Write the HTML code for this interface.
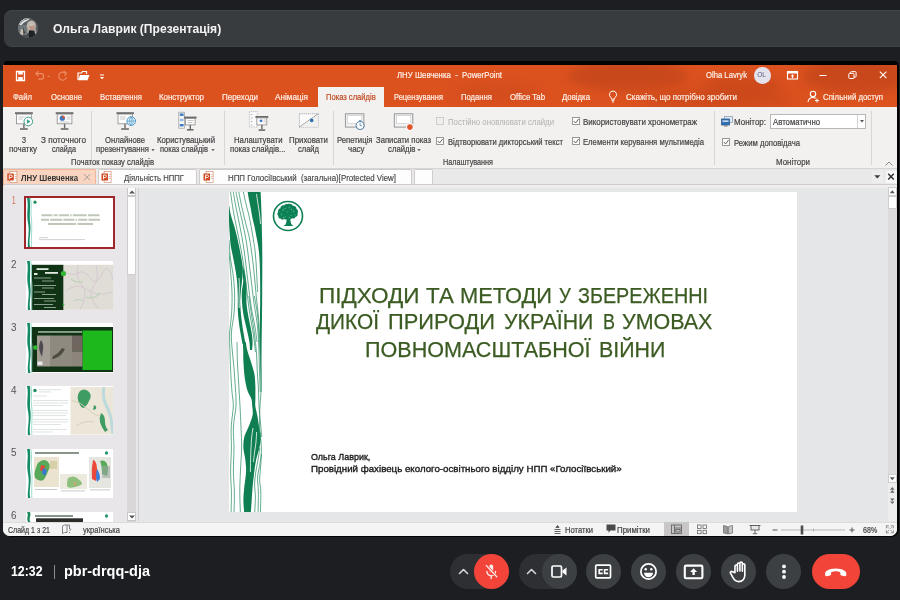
<!DOCTYPE html>
<html lang="uk">
<head>
<meta charset="utf-8">
<title>Meet</title>
<style>
*{box-sizing:border-box;margin:0;padding:0}
html,body{width:900px;height:600px;overflow:hidden;background:#1c1e22;font-family:"Liberation Sans",sans-serif}
#root{position:relative;width:900px;height:600px;overflow:hidden;background:#1c1e22;filter:blur(.4px)}
#root div,#root svg,#root span{position:absolute}
.t{white-space:pre;line-height:1;transform-origin:0 0;font-family:"Liberation Sans",sans-serif}
#namebar{left:4px;top:10px;width:900px;height:36.500px;background:#383c3f;border-radius:8px 0 0 8px;border-top:1px solid #42464a;border-bottom:1px solid #404447}
#avatar{left:17.500px;top:17.600px;width:20.800px;height:20.800px;border-radius:50%;overflow:hidden;background:#5b5a55}
#frame{left:3.500px;top:61px;width:895.500px;height:476px;background:#030303;border-radius:3px 5px 8px 8px}
#win{left:3.200px;top:65px;width:893.800px;height:471px;background:#e6e6e6;border-radius:1px 2px 7px 7px;overflow:hidden}
#orange{left:0;top:0;width:894px;height:41.500px;background:#dc521f;overflow:hidden}
.cl{border-radius:50%;background:#c2451b;filter:blur(5px);opacity:.75}
#acttab{left:314.400px;top:22.200px;width:66.800px;height:20px;background:#f3f1f0}
#ribbon{left:0;top:41.500px;width:894px;height:61.500px;background:#f3f1f0}
.vsep{width:1px;background:#d8d5d4;top:46px;height:54px}
#doctabs{left:0;top:102.500px;width:894px;height:21px;background:#eae9e9;border-top:1px solid #d6d4d3}
.dtab{top:104px;height:17px;background:#fdfdfd;border:1px solid #cfcccb;border-bottom:none;border-radius:2px 2px 0 0}
#dt1{left:0;width:93px;background:#f9d5c1;border-color:#f0b597}
#thumbs{left:0;top:122px;width:134px;height:335px;background:#e8e6e8}
#work{left:134px;top:122px;width:760px;height:335px;background:#e5e6e8}
#slide{left:225.500px;top:126.600px;width:568.300px;height:320.600px;background:#fff;overflow:hidden}
#status{left:0;top:456.500px;width:894px;height:15px;background:#f4f4f4;border-top:1px solid #dddcdc}
.th{left:21.7px;width:87px;height:49.5px;background:#fff;overflow:hidden}
.pill{background:#2d2f32;border-radius:18px;height:35px;top:554px}
.cb{width:35px;height:35px;border-radius:50%;background:#3c4043;top:554px}
.chk{width:8px;height:8px;border:1px solid #9a9897;background:#fbfbfb}

</style>
</head>
<body>
<div id="root">
<div id="namebar"></div>
<div id="avatar">
  <svg width="21" height="21" viewBox="0 0 21 21"><defs><filter id="bl" x="-20%" y="-20%" width="140%" height="140%"><feGaussianBlur stdDeviation=".7"/></filter></defs>
  <rect width="21" height="21" fill="#5a5e60"/>
  <g filter="url(#bl)"><path d="M0 9C2 3 7 0 13 0L0 0z" fill="#e9ecee"/><path d="M1 8C3 3.500 7 1.200 12 .8L9 3C6 4 4 6 2.500 9z" fill="#dfe3e5"/>
  <rect x="0" y="7" width="9" height="12" fill="#70777a"/><path d="M3 11l3 1-1 5-3-1z" fill="#c9bfae"/><path d="M5 9l2 6-1.500 1z" fill="#2b2d30"/>
  <ellipse cx="13.300" cy="8" rx="4.600" ry="5.600" fill="#bdb8b0"/><ellipse cx="14" cy="9" rx="2.700" ry="3.500" fill="#bb958a"/><ellipse cx="13.500" cy="6.500" rx="2.200" ry="1.500" fill="#c9c2b8"/>
  <path d="M8.500 21c0-5 2-8 5-8.500 3-.5 5.500 2 6 8.500z" fill="#1e2125"/><path d="M10 12.500l2 2.500 1.500-2.500z" fill="#15171a"/><path d="M16.500 9c1.500 2 2.500 5 2 9l-1.800-3z" fill="#a9a59e"/><path d="M9.800 8c-1 3-1 6 .2 9l1-4z" fill="#aaa59c"/>
  <rect x="3" y="17" width="8" height="4" fill="#4c4f51"/></g></svg>
</div>
<div id="frame"></div>
<div id="win">
  <div id="orange"><div class="cl" style="left:565px;top:-4px;width:120px;height:30px"></div><div class="cl" style="left:700px;top:10px;width:80px;height:22px;opacity:.5"></div><div class="cl" style="left:800px;top:-6px;width:110px;height:34px"></div><div class="cl" style="left:640px;top:24px;width:150px;height:22px;opacity:.45"></div><div class="cl" style="left:450px;top:18px;width:90px;height:20px;opacity:.3"></div></div>
  <div id="acttab"></div>
  <div id="ribbon"></div>
  <div class="vsep" style="left:88px"></div>
  <div class="vsep" style="left:221.300px"></div>
  <div class="vsep" style="left:329.500px"></div>
  <div class="vsep" style="left:711px"></div>
  <div class="vsep" style="left:868.300px"></div>
  <div id="doctabs"></div>
  <div class="dtab" id="dt1"></div>
  <div class="dtab" style="left:95px;width:99px"></div>
  <div class="dtab" style="left:196px;width:213px"></div>
  <div class="dtab" style="left:411px;width:19px"></div>
  <div id="thumbs"></div>
  <div id="work"></div>
  <div id="slide"></div>
  <div id="status"></div>
</div>
<!-- meet bottom -->
<div style="left:54px;top:565px;width:1px;height:14px;background:#8b8d90"></div>
<div class="pill" style="left:450px;width:59px"></div>
<div class="cb" style="left:474px;background:#f3443a"></div>
<div class="pill" style="left:518.5px;width:58px"></div>
<div class="cb" style="left:541.5px"></div>
<div class="cb" style="left:585.5px"></div>
<div class="cb" style="left:631px"></div>
<div class="cb" style="left:676px"></div>
<div class="cb" style="left:721px"></div>
<div class="cb" style="left:766px"></div>
<div class="pill" style="left:811.5px;width:48px;background:#f3443a"></div>
<!-- overlay in page coordinates -->
<div id="ov" style="left:0;top:0;width:900px;height:600px">
 <!-- thumbnails -->
 <div style="left:23.6px;top:195.6px;width:91.4px;height:53.2px;background:#a0262c"></div>
 <div class="th" style="left:25.6px;top:197.6px;width:87.4px;height:49.2px">
   <svg width="88" height="50" viewBox="0 0 88 50"><path d="M0 0h5.5c-2 8 1.500 14 .5 22s1.500 18-.5 28H0z" fill="#fff"/><path d="M1 0c2 9-1 14 1 25s-1 16 0 25h2.200c-2-9 1.200-15 0-25S5 9 3.600 0z" fill="#148a68"/><path d="M4.500 0c2 8-.5 12 .8 20s-.5 20 .3 30" stroke="#86d3bf" stroke-width=".8" fill="none"/><circle cx="9" cy="4.200" r="1.600" fill="#1f8a5c"/>
   <g stroke="#8c9a80" stroke-width="2" opacity=".55" fill="none"><path d="M15.500 17.300h58" stroke-dasharray="11 1.200 4 1.200 10 1.200 1.500 1.200 14 1.200 12"/><path d="M15 21.700h59" stroke-dasharray="8 1.200 12 1.200 11 1.200 1.500 1.200 9 1.200 12"/><path d="M22 26.100h45" stroke-dasharray="28 1.400 16"/></g>
   <rect x="13" y="39.300" width="9" height=".8" fill="#c5c5c5"/><rect x="13" y="41.300" width="46" height=".8" fill="#c5c5c5"/></svg>
 </div>
 <div class="th" style="left:25.7px;top:260.5px">
   <svg width="87" height="50" viewBox="0 0 87 50"><rect width="87" height="50" fill="#fff"/><rect x="5.600" y="3.800" width="32" height="46.200" fill="#0f3314"/><rect x="37.600" y="3.800" width="49.400" height="45" fill="#e0ddd7"/>
   <path d="M38 10q8 6 14 2t12 5 12-4 11 6M40 30q10-8 18-3t14 6 15-2M52 4q-3 12 4 20t-2 25M70 4q4 14-3 22t6 22" stroke="#d6c9d0" stroke-width="1" fill="none"/><path d="M45 18q6 5 12 2M60 36q8 3 14-4M48 40q4-3 9 0" stroke="#bdd3b8" stroke-width="1.200" fill="none"/>
   <path d="M1 0c2 9-1 14 1 25s-1 16 0 25h2.400c-2-9 1.200-15 0-25S5 9 3.800 0z" fill="#148a68"/><path d="M4.800 0c2 8-.5 12 .8 20s-.5 20 .3 30" stroke="#86d3bf" stroke-width=".8" fill="none"/>
   <circle cx="37.400" cy="12.500" r="2.600" fill="#2fb830"/><circle cx="37.400" cy="43.500" r="1" fill="#2fb830"/>
   <g fill="#dfe9df"><rect x="10.500" y="7.200" width="12" height="1.800"/><rect x="8" y="12" width="3.500" height="2"/><rect x="19" y="11" width="13" height="1.800"/><rect x="8" y="16.500" width="17" height="1" opacity=".6"/><rect x="16" y="19.500" width="12" height="1" opacity=".6"/><rect x="8" y="24" width="22" height="1" opacity=".6"/><rect x="16" y="26.500" width="12" height="1" opacity=".6"/><rect x="8" y="30.500" width="11" height="1" opacity=".6"/><rect x="16" y="33" width="14" height="1" opacity=".6"/><rect x="8" y="37" width="20" height="1" opacity=".6"/><rect x="18" y="39.500" width="12" height="1" opacity=".6"/><rect x="8" y="43" width="19" height="1" opacity=".6"/><rect x="18" y="46" width="12" height="1" opacity=".6"/></g></svg>
 </div>
 <div class="th" style="left:25.7px;top:323px">
   <svg width="87" height="50" viewBox="0 0 87 50"><rect width="87" height="50" fill="#fff"/><rect x="5.600" y="4" width="81.400" height="45" fill="#0f3314"/><rect x="56.500" y="7.500" width="29.500" height="39.500" fill="#1cb81c"/>
   <rect x="11" y="12.500" width="13" height="31" fill="#a39d93"/><rect x="24" y="12.500" width="22" height="31" fill="#8e8a80"/><rect x="46" y="12.500" width="10.500" height="16" fill="#6f675f"/><rect x="46" y="28.500" width="10.500" height="15" fill="#8c857c"/>
   <path d="M15 17q3 4 2 10t-1 7q-3-6-3-10t2-7z" fill="#4d4a52"/><path d="M27 33q6-3 9-8l3 1q-3 6-7 8t-6 2z" fill="#4e4a44"/><rect x="11.500" y="38.500" width="5" height="3.500" fill="#e8e8e8"/>
   <rect x="12" y="8.200" width="44" height="1.500" fill="#cfe0cf" opacity=".8"/>
   <path d="M1 0c2 9-1 14 1 25s-1 16 0 25h2.400c-2-9 1.200-15 0-25S5 9 3.800 0z" fill="#148a68"/><path d="M4.800 0c2 8-.5 12 .8 20s-.5 20 .3 30" stroke="#86d3bf" stroke-width=".8" fill="none"/>
   <circle cx="9.300" cy="24.600" r="2.300" fill="#2fb830"/></svg>
 </div>
 <div class="th" style="left:25.7px;top:385.500px">
   <svg width="87" height="50" viewBox="0 0 87 50"><rect width="87" height="50" fill="#fff"/><rect x="44.500" y="1" width="42.500" height="47.500" fill="#ece6d8"/>
   <path d="M54 5q4-3 8 0t2 8-5 8-6-4 1-12zM75 27q4 2 4 8t3 9l-3 2q-4-6-5-10t1-9zM68 19q3 1 2 4l-3 1z" fill="#3f9c62"/><path d="M78 1q-2 10 2 18t5 14 2 15" stroke="#bcd9dc" stroke-width="3" fill="none"/><path d="M45 14q10 2 18 10t12 4M50 40q8-6 18-4" stroke="#d9cfbf" stroke-width="1" fill="none"/>
   <path d="M1 0c2 9-1 14 1 25s-1 16 0 25h2.400c-2-9 1.200-15 0-25S5 9 3.800 0z" fill="#148a68"/><path d="M4.800 0c2 8-.5 12 .8 20s-.5 20 .3 30" stroke="#86d3bf" stroke-width=".8" fill="none"/>
   <circle cx="9" cy="4.500" r="1.700" fill="#1f8a5c"/>
   <g fill="#dde2df"><rect x="13" y="3.200" width="22" height="1"/><rect x="13" y="5.400" width="12" height="1"/><rect x="7" y="9.500" width="14" height=".9"/><rect x="7" y="14" width="35" height=".9"/><rect x="7" y="16.500" width="35" height=".9"/><rect x="7" y="19" width="30" height=".9"/><rect x="7" y="24" width="35" height=".9"/><rect x="7" y="26.500" width="35" height=".9"/><rect x="7" y="29" width="33" height=".9"/><rect x="7" y="33" width="35" height=".9"/><rect x="7" y="35.500" width="35" height=".9"/><rect x="7" y="38" width="28" height=".9"/><rect x="7" y="43" width="34" height=".9"/><rect x="7" y="45.500" width="20" height=".9"/></g></svg>
 </div>
 <div class="th" style="left:25.7px;top:448.700px">
   <svg width="87" height="50" viewBox="0 0 87 50"><rect width="87" height="50" fill="#fff"/>
   <rect x="8" y="8" width="25" height="30" fill="#e9e3d0"/><path d="M12 14q5-5 9-2t2 8-4 9-7 2-3-9 3-8z" fill="#58a85a"/><path d="M15 16l4 1-1 6-4-2z" fill="#e0483a"/><path d="M17 19l4 2-2 6-3-3z" fill="#3878d0"/><rect x="24" y="12" width="7" height="8" fill="#d6cfa8"/>
   <rect x="34" y="25" width="27" height="15" fill="#eceadf"/><path d="M42 29q5-3 9 0t5 5-7 4-8-2 1-7z" fill="#8cc07c"/><path d="M47 33l4 1-2 3z" fill="#d7a070"/>
   <rect x="63" y="8" width="22" height="31" fill="#e6e6e0"/><path d="M67 11q3 0 4 8t-1 13l-4-2q-1-10 1-19z" fill="#ea4a3a"/><path d="M71 20q3 4 3 10l-3 3q-2-6 0-13z" fill="#3d7ed8"/><path d="M74 12q5-2 7 3t0 12l-5-2q0-8-2-13z" fill="#5aa95c"/><rect x="76" y="17" width="8" height="12" fill="#9aa8a0" opacity=".6"/>
   <rect x="9" y="40" width="22" height=".8" fill="#bbb"/><rect x="35" y="41.500" width="24" height=".8" fill="#bbb"/><rect x="64" y="40.500" width="20" height=".8" fill="#bbb"/>
   <rect x="9" y="3.300" width="44" height="1.400" fill="#56685b"/><circle cx="80.500" cy="4" r="1.700" fill="#2d9a6e"/>
   <path d="M1 0c2 9-1 14 1 25s-1 16 0 25h2.400c-2-9 1.200-15 0-25S5 9 3.800 0z" fill="#148a68"/><path d="M4.800 0c2 8-.5 12 .8 20s-.5 20 .3 30" stroke="#86d3bf" stroke-width=".8" fill="none"/></svg>
 </div>
 <div class="th" style="left:25.7px;top:511.800px;height:10px">
   <svg width="87" height="10" viewBox="0 0 87 10"><rect width="87" height="10" fill="#fff"/><rect x="9" y="3.300" width="38" height="1.400" fill="#56685b"/><rect x="10" y="6.300" width="47" height="3.700" fill="#2a2d28"/><circle cx="80.500" cy="4" r="1.700" fill="#2d9a6e"/>
   <path d="M1 0c2 4-1 6 1 10h2.400c-2-4 1.200-6-.4-10z" fill="#1f8a5c"/></svg>
 </div>

 <!-- slide art -->
 <svg style="left:229px;top:191.500px" width="36" height="320.500" viewBox="0 0 36 320.500">
<g fill="#0f7f52"><path d="M18.5 -1.0C18.8 0.5 19.5 5.2 20.0 8.0C20.5 10.8 21.2 13.2 21.7 16.0C22.2 18.8 22.6 22.0 23.2 25.0C23.8 28.0 24.7 30.8 25.4 34.0C26.1 37.2 26.7 40.8 27.3 44.0C27.9 47.2 28.5 49.7 29.0 53.0C29.5 56.3 30.0 59.5 30.3 64.0C30.6 68.5 30.9 74.0 31.0 80.0C31.1 86.0 31.2 92.5 31.2 100.0C31.2 107.5 31.1 116.7 31.0 125.0C30.9 133.3 30.7 141.7 30.8 150.0C30.9 158.3 31.2 166.7 31.4 175.0C31.6 183.3 31.9 195.8 32.0 200.0L32.4 200.0C32.4 195.8 32.5 183.3 32.5 175.0C32.5 166.7 32.5 158.3 32.6 150.0C32.7 141.7 32.9 133.3 33.0 125.0C33.1 116.7 33.2 107.5 33.2 100.0C33.2 92.5 33.3 86.0 33.3 80.0C33.3 74.0 33.3 68.5 33.3 64.0C33.3 59.5 33.2 56.3 33.2 53.0C33.2 49.7 33.1 47.2 33.0 44.0C32.9 40.8 32.9 37.2 32.8 34.0C32.7 30.8 32.7 28.0 32.6 25.0C32.5 22.0 32.4 18.8 32.3 16.0C32.2 13.2 32.1 10.8 32.0 8.0C31.9 5.2 31.6 0.5 31.5 -1.0Z"/><path d="M0.0 14.0C0.0 15.0 0.0 17.8 0.0 20.0C0.0 22.2 -0.0 24.7 0.0 27.0C0.0 29.3 0.1 31.3 0.2 34.0C0.3 36.7 0.6 39.8 0.8 43.0C1.0 46.2 1.2 49.8 1.6 53.0C2.0 56.2 2.8 59.0 3.4 62.0C4.0 65.0 4.6 68.0 5.2 71.0C5.8 74.0 6.3 77.0 6.8 80.0C7.3 83.0 7.7 86.0 8.0 89.0C8.3 92.0 8.5 94.8 8.6 98.0C8.7 101.2 8.8 104.7 8.8 108.0C8.8 111.3 8.7 114.7 8.8 118.0C8.9 121.3 9.2 124.7 9.6 128.0C10.0 131.3 10.5 135.0 11.0 138.0C11.5 141.0 12.0 143.7 12.4 146.0C12.8 148.3 13.4 151.0 13.6 152.0L16.6 152.0C16.4 151.0 15.8 148.3 15.4 146.0C15.0 143.7 14.5 141.0 14.0 138.0C13.5 135.0 13.0 131.3 12.6 128.0C12.2 124.7 11.8 121.3 11.6 118.0C11.4 114.7 11.1 111.3 11.2 108.0C11.3 104.7 11.7 101.2 12.0 98.0C12.3 94.8 12.7 92.0 13.0 89.0C13.3 86.0 13.8 83.0 13.8 80.0C13.8 77.0 13.6 74.0 13.2 71.0C12.8 68.0 12.2 65.0 11.6 62.0C11.0 59.0 10.5 56.2 9.8 53.0C9.1 49.8 8.4 46.2 7.6 43.0C6.8 39.8 6.0 36.7 5.2 34.0C4.4 31.3 3.7 29.3 3.0 27.0C2.3 24.7 1.6 22.2 1.2 20.0C0.8 17.8 0.4 15.0 0.3 14.0Z"/><path d="M13.4 74.0C13.5 75.3 13.7 79.3 13.8 82.0C13.9 84.7 14.4 87.0 14.2 90.0C14.0 93.0 13.0 96.7 12.8 100.0C12.6 103.3 12.8 106.7 13.0 110.0C13.2 113.3 13.5 116.7 14.0 120.0C14.5 123.3 15.2 126.5 16.0 130.0C16.8 133.5 17.9 137.7 18.6 141.0C19.3 144.3 20.0 147.2 20.4 150.0C20.8 152.8 20.9 156.7 21.0 158.0L23.0 158.0C23.1 156.7 23.7 152.8 23.6 150.0C23.6 147.2 23.2 144.3 22.7 141.0C22.2 137.7 21.2 133.5 20.5 130.0C19.8 126.5 19.1 123.3 18.6 120.0C18.1 116.7 17.6 113.3 17.4 110.0C17.2 106.7 17.6 103.3 17.6 100.0C17.6 96.7 17.5 93.0 17.2 90.0C16.9 87.0 16.5 84.7 16.0 82.0C15.5 79.3 14.3 75.3 14.0 74.0Z"/><path d="M13.8 150.0C13.9 151.3 14.1 154.8 14.2 158.0C14.3 161.2 14.2 165.0 14.4 169.0C14.6 173.0 14.9 178.0 15.3 182.0C15.7 186.0 16.4 190.0 17.0 193.0C17.6 196.0 18.1 197.7 19.0 200.0C19.9 202.3 21.7 204.7 22.4 207.0C23.1 209.3 23.0 211.3 23.2 214.0C23.4 216.7 24.2 219.7 23.6 223.0C23.1 226.3 21.3 230.3 19.9 234.0C18.5 237.7 16.2 241.3 15.3 245.0C14.4 248.7 14.2 252.3 14.4 256.0C14.6 259.7 15.8 263.2 16.2 267.0C16.6 270.8 17.2 274.3 17.1 279.0C17.0 283.7 15.8 290.2 15.3 295.0C14.9 299.8 14.4 303.5 14.4 308.0C14.4 312.5 15.2 319.7 15.3 322.0L21.7 322.0C21.9 319.7 22.4 312.5 22.7 308.0C23.0 303.5 23.2 299.8 23.6 295.0C24.1 290.2 24.8 283.7 25.4 279.0C26.0 274.3 26.5 270.8 27.3 267.0C28.1 263.2 29.6 259.7 30.4 256.0C31.1 252.3 31.9 248.7 31.8 245.0C31.7 241.3 30.6 237.7 30.0 234.0C29.4 230.3 28.8 226.3 28.2 223.0C27.6 219.7 26.6 216.7 26.3 214.0C26.0 211.3 26.4 209.3 26.4 207.0C26.4 204.7 26.4 202.3 26.4 200.0C26.4 197.7 26.5 196.0 26.3 193.0C26.1 190.0 26.2 186.0 25.4 182.0C24.6 178.0 22.9 173.0 21.7 169.0C20.5 165.0 19.0 161.2 18.2 158.0C17.4 154.8 17.0 151.3 16.8 150.0Z"/></g>
<g fill="none" stroke="#2f9068" stroke-width=".75"><path d="M1.5 0.0C2.0 3.3 3.3 13.3 4.5 20.0C5.7 26.7 7.2 33.3 8.5 40.0C9.8 46.7 11.3 53.3 12.5 60.0C13.7 66.7 14.6 73.3 15.5 80.0C16.4 86.7 17.2 93.3 18.0 100.0C18.8 106.7 19.5 113.3 20.5 120.0C21.5 126.7 23.0 133.3 24.0 140.0C25.0 146.7 26.1 156.7 26.5 160.0"/><path d="M4.3 0.0C4.8 3.0 6.3 12.0 7.5 18.0C8.7 24.0 10.0 29.8 11.2 36.0C12.4 42.2 13.6 48.5 14.6 55.0C15.6 61.5 16.4 68.3 17.2 75.0C18.0 81.7 18.8 88.3 19.6 95.0C20.4 101.7 21.1 108.3 22.2 115.0C23.3 121.7 25.0 129.2 26.0 135.0C27.0 140.8 27.7 147.5 28.0 150.0"/><path d="M7.0 0.0C7.5 2.5 8.9 9.7 10.0 15.0C11.1 20.3 12.6 26.2 13.8 32.0C15.0 37.8 16.4 43.7 17.4 50.0C18.4 56.3 19.2 63.3 20.0 70.0C20.8 76.7 21.6 83.3 22.4 90.0C23.2 96.7 23.9 103.3 24.8 110.0C25.7 116.7 27.2 123.3 28.0 130.0C28.8 136.7 29.2 142.5 29.6 150.0C30.0 157.5 30.1 166.7 30.4 175.0C30.7 183.3 31.1 195.8 31.2 200.0"/><path d="M9.8 0.0C10.3 2.3 11.5 9.0 12.6 14.0C13.7 19.0 15.1 24.7 16.4 30.0C17.7 35.3 19.2 40.0 20.4 46.0C21.6 52.0 22.5 59.3 23.4 66.0C24.3 72.7 24.9 79.3 25.6 86.0C26.3 92.7 26.7 99.3 27.4 106.0C28.1 112.7 29.1 119.3 29.6 126.0C30.1 132.7 30.3 142.7 30.4 146.0"/><path d="M14.4 0.0C14.8 2.0 16.0 7.7 17.0 12.0C18.0 16.3 19.4 20.8 20.5 26.0C21.6 31.2 22.7 37.3 23.6 43.0C24.6 48.7 25.5 53.8 26.2 60.0C26.9 66.2 27.2 73.3 27.6 80.0C28.0 86.7 28.4 96.7 28.6 100.0"/><path d="M0.0 48.0C0.2 51.0 0.7 60.3 1.4 66.0C2.1 71.7 3.3 76.3 4.0 82.0C4.7 87.7 5.4 93.7 5.6 100.0C5.8 106.3 5.7 113.2 5.2 120.0C4.7 126.8 2.7 134.3 2.4 141.0C2.1 147.7 2.9 153.8 3.4 160.0C3.9 166.2 4.7 172.0 5.2 178.0C5.7 184.0 6.1 190.0 6.4 196.0C6.7 202.0 7.3 207.5 7.0 214.0C6.7 220.5 4.7 228.0 4.4 235.0C4.1 242.0 5.0 248.5 5.0 256.0C5.0 263.5 4.3 272.7 4.4 280.0C4.5 287.3 5.3 293.0 5.4 300.0C5.5 307.0 5.1 318.3 5.0 322.0"/><path d="M0.0 60.0C0.3 63.3 1.1 73.3 1.6 80.0C2.1 86.7 2.8 93.0 3.0 100.0C3.2 107.0 3.0 115.2 2.6 122.0C2.2 128.8 0.9 134.7 0.6 141.0C0.3 147.3 0.8 153.8 1.0 160.0C1.2 166.2 1.3 171.3 1.6 178.0C1.9 184.7 2.5 194.0 3.0 200.0C3.5 206.0 4.4 208.2 4.3 214.0C4.2 219.8 2.5 228.0 2.2 235.0C1.9 242.0 2.5 248.5 2.4 256.0C2.3 263.5 1.6 272.7 1.6 280.0C1.6 287.3 2.3 293.0 2.4 300.0C2.5 307.0 2.1 318.3 2.0 322.0"/><path d="M8.0 150.0C8.1 153.3 8.1 163.3 8.4 170.0C8.7 176.7 9.2 182.7 9.6 190.0C10.0 197.3 10.6 206.5 11.0 214.0C11.4 221.5 11.7 228.0 12.0 235.0C12.3 242.0 12.7 248.5 12.6 256.0C12.5 263.5 11.7 272.7 11.4 280.0C11.1 287.3 10.8 293.0 10.8 300.0C10.8 307.0 11.3 318.3 11.4 322.0"/><path d="M19.9 104.0C20.3 107.0 21.5 115.8 22.4 122.0C23.3 128.2 24.6 134.7 25.4 141.0C26.2 147.3 26.9 153.8 27.4 160.0C27.9 166.2 27.9 172.0 28.2 178.0C28.5 184.0 29.1 190.0 29.4 196.0C29.7 202.0 29.7 208.3 30.0 214.0C30.3 219.7 30.9 224.8 31.4 230.0C31.9 235.2 32.6 242.5 32.8 245.0"/><path d="M25.4 104.0C25.9 107.0 27.6 115.8 28.4 122.0C29.2 128.2 29.6 134.7 30.0 141.0C30.4 147.3 30.7 153.8 31.0 160.0C31.3 166.2 31.6 172.0 31.8 178.0C32.0 184.0 32.3 190.0 32.2 196.0C32.1 202.0 31.3 207.7 31.0 214.0C30.7 220.3 30.4 227.0 30.6 234.0C30.8 241.0 32.3 250.0 32.4 256.0C32.5 262.0 31.8 265.2 31.2 270.0C30.6 274.8 28.9 280.0 28.6 285.0C28.3 290.0 29.3 293.8 29.4 300.0C29.5 306.2 29.1 318.3 29.0 322.0"/><path d="M30.8 256.0C30.5 258.0 29.7 264.0 29.0 268.0C28.3 272.0 27.4 276.0 26.8 280.0C26.2 284.0 25.7 287.8 25.6 292.0C25.5 296.2 26.4 300.0 26.4 305.0C26.4 310.0 25.7 319.2 25.6 322.0"/><path d="M32.6 262.0C32.4 264.2 31.9 270.7 31.6 275.0C31.3 279.3 30.6 283.8 30.6 288.0C30.6 292.2 31.7 294.3 31.8 300.0C31.9 305.7 31.5 318.3 31.4 322.0"/></g>
<g fill="none" stroke="#fff" stroke-width=".8"><path d="M27.5 2.0C27.8 3.7 28.5 8.7 29.0 12.0C29.5 15.3 30.1 18.7 30.5 22.0C30.9 25.3 31.4 30.3 31.6 32.0"/><path d="M24.0 236.0C23.8 237.7 22.9 242.7 22.6 246.0C22.3 249.3 22.2 252.3 22.0 256.0C21.8 259.7 21.7 264.0 21.6 268.0C21.5 272.0 21.4 278.0 21.4 280.0"/><path d="M27.6 240.0C27.5 241.7 27.3 246.7 27.0 250.0C26.7 253.3 26.0 256.7 25.6 260.0C25.2 263.3 24.6 268.3 24.4 270.0"/><path d="M10.0 86.0C10.1 87.7 10.4 92.7 10.4 96.0C10.4 99.3 10.0 102.7 10.0 106.0C10.0 109.3 10.2 114.3 10.2 116.0"/></g>
</svg>
 <!-- logo -->
 <svg style="left:270.800px;top:199.300px" width="34" height="34" viewBox="0 0 34 34">
  <circle cx="17" cy="17" r="14.500" fill="#fff" stroke="#0f7f52" stroke-width="1.600"/>
  <path fill="#0d8055" d="M16.500 5c2.300-.8 4.600 0 5.400 1.700 2.200-.1 3.700 1.300 3.600 3.200 1.600.9 2 2.900 1 4.300.7 1.700-.3 3.500-2.100 3.700-.4 1.300-1.900 2-3.300 1.400-.5.500-1.100.7-1.700.6.100 2.300.4 4.300 1.300 5.600l1.700 1.600h-9.800l1.900-1.600c.8-1.500 1.100-3.300 1.100-5.300-.800.600-1.800.500-2.500-.100-1.100.900-2.800.700-3.500-.500-1.500.100-2.600-1.200-2.200-2.700-1.300-1-1.400-2.900-.200-4-.500-1.700.500-3.400 2.200-3.700.100-1.900 1.700-3.200 3.600-2.800.700-1.100 2.100-1.700 3.500-1.400z"/>
  <g fill="#3fcfa0" opacity=".55"><circle cx="12" cy="11" r="1"/><circle cx="18.500" cy="8.500" r=".9"/><circle cx="22.500" cy="12.500" r="1"/><circle cx="10.500" cy="15.500" r=".9"/><circle cx="16.500" cy="13" r=".8"/><circle cx="20" cy="16.500" r=".8"/><circle cx="24" cy="16" r=".7"/><circle cx="14.500" cy="17.500" r=".7"/></g>
  <g fill="#fff" opacity=".5"><circle cx="14" cy="9.500" r=".6"/><circle cx="20.500" cy="10.500" r=".6"/><circle cx="12.500" cy="18.800" r=".7"/><circle cx="18.300" cy="18.600" r=".5"/></g>
 </svg>

 <!-- thumbs scrollbar -->
 <div style="left:126.500px;top:186.500px;width:9.500px;height:335px;background:#d9d7d8"></div>
 <div style="left:126.500px;top:186.500px;width:9.500px;height:9.500px;background:#fdfdfd;border:1px solid #c9c7c8"></div>
 <div style="left:126.500px;top:196px;width:9.500px;height:79px;background:#fdfdfd;border:1px solid #cfcdce"></div>
 <div style="left:126.500px;top:511.500px;width:9.500px;height:9.500px;background:#fdfdfd;border:1px solid #c9c7c8"></div>
 <svg style="left:128.500px;top:189.500px" width="6" height="4" viewBox="0 0 6 4"><path d="M0 3.500L3 .5l3 3z" fill="#555"/></svg>
 <svg style="left:128.500px;top:514.500px" width="6" height="4" viewBox="0 0 6 4"><path d="M0 .5h6L3 3.500z" fill="#555"/></svg>
 <div style="left:137.500px;top:187px;width:1px;height:334px;background:#d2d0d1"></div>
</div>
<div id="ov2" style="left:0;top:0;width:900px;height:600px">
 <!-- quick access toolbar -->
 <svg style="left:15.300px;top:70px" width="56" height="12" viewBox="0 0 56 12">
  <path d="M1.500 1.500h8v9h-8z" fill="none" stroke="#fff" stroke-width="1.300"/><rect x="3.200" y="1.500" width="4.600" height="3" fill="#fff"/><rect x="3.200" y="7" width="4.600" height="3.500" fill="#fff"/>
  <path d="M21.500 3.700h4.400a2.600 2.600 0 010 5.500h-2.700" fill="none" stroke="#ec8a62" stroke-width="1.200"/><path d="M23.600 1.300l-2.700 2.400 2.700 2.400" fill="none" stroke="#ec8a62" stroke-width="1.200"/><rect x="32.500" y="5.800" width="2.500" height="1" fill="#ec8a62"/>
  <path d="M50.800 3.600a4 4 0 10.800 3.600" fill="none" stroke="#ec8a62" stroke-width="1.200"/><path d="M48.600 1l2.900 2.200-2.100 2.700" fill="none" stroke="#ec8a62" stroke-width="1.100"/>
 </svg>
 <svg style="left:77px;top:70px" width="30" height="12" viewBox="0 0 30 12">
  <path d="M1 10V3h3.500l1-1.500h4V4" fill="none" stroke="#fff" stroke-width="1.200"/><path d="M1 10.300l2-5.300h9.500l-2 5.300z" fill="#fff"/>
  <rect x="23" y="4.500" width="4" height="1" fill="#fff"/><path d="M23 7h4l-2 2.200z" fill="#fff"/>
 </svg>
 <!-- account / window controls -->
 <div style="left:754px;top:67px;width:16.500px;height:16.500px;border-radius:50%;background:#e4e2ec"></div>
 <span class="t" style="left:757.300px;top:72.200px;font-size:6.500px;color:#555a78;letter-spacing:-.2px">OL</span>
 <svg style="left:786px;top:69px" width="104" height="13" viewBox="0 0 104 13">
  <rect x="1.500" y="2.500" width="10" height="7.500" fill="none" stroke="#fff" stroke-width="1.100"/><rect x="1.500" y="2.500" width="10" height="2" fill="#fff"/><path d="M6.500 5.200L4.700 7.200h1.200v1.900h1.200V7.200h1.200z" fill="#fff"/>
  <rect x="33.500" y="6" width="7" height="1" fill="#fff"/>
  <rect x="62.800" y="4.300" width="5.200" height="5.200" rx=".8" fill="none" stroke="#fff" stroke-width="1"/><path d="M64.500 4.300V3.600q0-1 1-1h3.600q1 0 1 1v3.600q0 1-1 1h-1.100" fill="none" stroke="#fff" stroke-width="1"/>
  <path d="M93.800 2.600l6.600 6.600m0-6.600l-6.600 6.600" stroke="#fff" stroke-width="1.100"/>
 </svg>
 <!-- lightbulb / share -->
 <svg style="left:608px;top:90px" width="10" height="13" viewBox="0 0 10 13"><path d="M5 1a3.600 3.600 0 00-2.200 6.400c.5.500.7 1 .7 1.800h3c0-.8.200-1.300.7-1.800A3.600 3.600 0 005 1z" fill="none" stroke="#fff" stroke-width="1"/><path d="M3.700 10.600h2.600M4 12h2" stroke="#fff" stroke-width=".9"/></svg>
 <svg style="left:807px;top:90px" width="13" height="13" viewBox="0 0 13 13"><circle cx="6" cy="4" r="2.700" fill="none" stroke="#fff" stroke-width="1.100"/><path d="M1 12c.4-3 2.400-4.500 5-4.500 1 0 2 .3 2.700.8" fill="none" stroke="#fff" stroke-width="1.100"/><path d="M10 8.500v4M8 10.500h4" stroke="#fff" stroke-width="1"/></svg>
 <!-- ribbon icons -->
 <svg style="left:0;top:106px" width="440" height="30" viewBox="0 106 440 30"><rect x="15.0" y="112.2" width="17.8" height="1.9" fill="#6a6a6a"/><rect x="16.5" y="114.1" width="14.8" height="9.7" fill="#fcfcfc" stroke="#8a8a8a" stroke-width=".8"/><rect x="23.2" y="123.8" width="1.400" height="4.4" fill="#6a6a6a"/><rect x="20.0" y="128.2" width="7.7" height="1.600" fill="#6a6a6a"/><g stroke="#b5b5b5" stroke-width=".7"><path d="M18.500 117h6M18.500 119h4"/></g><circle cx="28.300" cy="121.500" r="4.300" fill="#fff" stroke="#3f9f8c" stroke-width="1"/><path d="M26.900 119.200v4.600l3.700-2.300z" fill="#3f9f8c"/><rect x="55.7" y="112.2" width="17.7" height="1.9" fill="#6a6a6a"/><rect x="57.2" y="114.1" width="14.7" height="9.7" fill="#fcfcfc" stroke="#8a8a8a" stroke-width=".8"/><rect x="63.9" y="123.8" width="1.400" height="4.4" fill="#6a6a6a"/><rect x="60.7" y="128.2" width="7.7" height="1.600" fill="#6a6a6a"/><circle cx="62.300" cy="118.200" r="2.600" fill="#3b78c4"/><path d="M62.300 118.200V115.600A2.600 2.600 0 0164.900 118.200z" fill="#e0552b"/><g stroke="#b5b5b5" stroke-width=".7"><path d="M66.500 117h4M66.500 119h4M59.500 122h10"/></g><rect x="116.5" y="112.2" width="17.4" height="1.9" fill="#6a6a6a"/><rect x="118.0" y="114.1" width="14.4" height="9.7" fill="#fcfcfc" stroke="#8a8a8a" stroke-width=".8"/><rect x="124.3" y="123.8" width="1.400" height="4.4" fill="#6a6a6a"/><rect x="121.2" y="128.2" width="7.7" height="1.600" fill="#6a6a6a"/><g stroke="#b5b5b5" stroke-width=".7"><path d="M120 117h6M120 119h5"/></g><circle cx="131.200" cy="121.100" r="4.300" fill="#eaf4fb" stroke="#3b8ec2" stroke-width=".9"/><path d="M127 121.100h8.400M131.200 116.900v8.400M131.200 116.900c-2.600 2-2.600 6.400 0 8.400M131.200 116.900c2.600 2 2.600 6.400 0 8.400" fill="none" stroke="#3b8ec2" stroke-width=".6"/><rect x="178.800" y="112.200" width="5.800" height="16" fill="#f7f7f7" stroke="#9a9a9a" stroke-width=".7"/><rect x="179.800" y="113.500" width="3.800" height="2.400" fill="#3b78c4"/><rect x="179.800" y="118.800" width="3.800" height="2.400" fill="#9dbbe0"/><rect x="179.800" y="124" width="3.800" height="2.400" fill="#3b78c4"/><rect x="183.9" y="116.6" width="12.7" height="1.9" fill="#6a6a6a"/><rect x="185.4" y="118.5" width="9.7" height="6.4" fill="#fcfcfc" stroke="#8a8a8a" stroke-width=".8"/><rect x="189.6" y="124.9" width="1.400" height="4.1" fill="#6a6a6a"/><rect x="186.9" y="129.0" width="6.6" height="1.600" fill="#6a6a6a"/><g stroke="#b5b5b5" stroke-width=".7"><path d="M187.500 120.500h6M187.500 122.500h5"/></g><rect x="249.400" y="111.600" width="7.800" height="15.400" fill="#fafafa" stroke="#a8a8a8" stroke-width=".7" stroke-dasharray="1 .8"/><g stroke="#8a8a8a" stroke-width=".7"><path d="M250.800 114.500h1.500M250.800 118h1.500M250.800 121.500h1.500M250.800 125h1.500"/></g><rect x="255.4" y="116.0" width="12.9" height="1.9" fill="#6a6a6a"/><rect x="256.9" y="117.9" width="9.9" height="7.0" fill="#fcfcfc" stroke="#8a8a8a" stroke-width=".8"/><rect x="261.2" y="124.9" width="1.400" height="4.4" fill="#6a6a6a"/><rect x="258.6" y="129.3" width="6.6" height="1.600" fill="#6a6a6a"/><circle cx="261" cy="120.800" r="1.400" fill="#3b78c4"/><path d="M263.500 120h2.500M263.500 122h2.500" stroke="#b5b5b5" stroke-width=".7"/><rect x="299.400" y="113.800" width="18.900" height="13.300" fill="#fafafa" stroke="#9a9a9a" stroke-width=".8" stroke-dasharray="1.200 .9"/><path d="M299.400 127.100L318.300 113.800" stroke="#7a7a7a" stroke-width="1"/><path d="M318.300 113.800v13.300h-18.900z" fill="#ececec" opacity=".7"/><circle cx="311.700" cy="120.400" r="1.800" fill="#2f6fb5"/><rect x="345.400" y="113.800" width="18.500" height="13.300" fill="#f2f2f2" stroke="#8e8e8e" stroke-width=".9"/><rect x="347.400" y="115.600" width="14.500" height="7.800" fill="#fff" stroke="#c5c5c5" stroke-width=".6"/><circle cx="360.100" cy="125.600" r="4" fill="#fdfdfd" stroke="#4f7fa6" stroke-width="1"/><path d="M360.100 123.200v2.500h1.900" fill="none" stroke="#4f7fa6" stroke-width=".8"/><rect x="359.100" y="120.200" width="2" height="1.300" fill="#4f7fa6"/><rect x="394.300" y="113.800" width="18.500" height="13.300" fill="#f2f2f2" stroke="#8e8e8e" stroke-width=".9"/><rect x="396.300" y="115.600" width="14.500" height="7.800" fill="#fff" stroke="#c5c5c5" stroke-width=".6"/><circle cx="409.900" cy="127.100" r="3.900" fill="#fdfdfd"/><circle cx="409.900" cy="127.100" r="2.800" fill="#e0552b"/></svg>
 <!-- checkboxes -->
 <div class="chk" style="left:436px;top:117px;border-color:#cfcdcc;background:#f1efee"></div>
 <div class="chk" style="left:436px;top:137px"></div>
 <div class="chk" style="left:572px;top:117px"></div>
 <div class="chk" style="left:572px;top:137px"></div>
 <div class="chk" style="left:722px;top:138px"></div>
 <svg style="left:436px;top:117px" width="300" height="30" viewBox="0 0 300 30"><g fill="none" stroke="#666" stroke-width="1"><path d="M1.800 24l1.800 2 3-4"/><path d="M137.800 4l1.800 2 3-4"/><path d="M137.800 24l1.800 2 3-4"/><path d="M287.800 25l1.800 2 3-4"/></g></svg>
 <!-- monitor dropdown -->
 <div style="left:770px;top:114px;width:96px;height:14.500px;background:#fff;border:1px solid #b9b7b6"></div>
 <div style="left:856.500px;top:115px;width:1px;height:12.500px;background:#d5d3d2"></div>
 <svg style="left:859.500px;top:120.300px" width="4" height="3" viewBox="0 0 4 3"><path d="M0 0h4L2 2.400z" fill="#555"/></svg>
 <svg style="left:721px;top:115.500px" width="12" height="11" viewBox="0 0 12 11"><rect x="3.500" y=".5" width="8" height="6" fill="#dfe9f3" stroke="#8da3b8" stroke-width=".8"/><rect x=".5" y="3" width="8" height="6" fill="#2f6fb5" stroke="#335f8e" stroke-width=".8"/><rect x="1.500" y="4.500" width="6" height="1.200" fill="#fff"/><rect x="3" y="9.500" width="3.500" height="1" fill="#777"/></svg>
 <!-- ribbon dropdown arrows -->
 <svg style="left:150.500px;top:148.500px" width="4" height="3" viewBox="0 0 4 3"><path d="M.3 0h3.400L2 2.200z" fill="#666"/></svg>
 <svg style="left:210.500px;top:148.500px" width="4" height="3" viewBox="0 0 4 3"><path d="M.3 0h3.400L2 2.200z" fill="#666"/></svg>
 <svg style="left:417px;top:148.500px" width="4" height="3" viewBox="0 0 4 3"><path d="M.3 0h3.400L2 2.200z" fill="#666"/></svg>
 <!-- collapse chevron -->
 <svg style="left:885px;top:160.500px" width="8" height="5" viewBox="0 0 8 5"><path d="M.5 4.500L4 1l3.500 3.500" fill="none" stroke="#8a8887" stroke-width="1"/></svg>
</div>
<div id="ov3" style="left:0;top:0;width:900px;height:600px">
 <!-- meet control icons (page coords via viewBox) -->
 <svg style="left:440px;top:550px" width="460" height="44" viewBox="440 550 460 44">
  <g fill="none" stroke="#d6d8da" stroke-width="1.600" stroke-linecap="round" stroke-linejoin="round"><path d="M459.500 573.500l4-4 4 4"/><path d="M527.500 573.500l4-4 4 4"/></g>
  <!-- mic off -->
  <g transform="translate(491.300 571.500) scale(.880) translate(-491.300 -571.500)" opacity=".92"><g stroke="#fff" fill="none" stroke-width="1.500" stroke-linecap="round"><rect x="489" y="563.500" width="4.400" height="9" rx="2.200" fill="#fff" stroke="none"/><path d="M486.300 571.500a4.900 4.900 0 009.800 0M491.200 576.500v3"/><path d="M485.500 564.500l12 13" stroke="#f3443a" stroke-width="3"/><path d="M485.500 564.500l12 13" stroke-width="1.400"/></g></g>
  <!-- camera -->
  <rect x="552" y="566" width="9.500" height="11" rx="1.300" fill="none" stroke="#fff" stroke-width="1.700"/><path d="M562.500 570.500l4-3v8l-4-3z" fill="#fff"/>
  <!-- cc -->
  <rect x="595.700" y="565.200" width="14.800" height="12.600" rx="1" fill="none" stroke="#fff" stroke-width="1.700"/><path d="M602.700 569.700h-3.500v3.700h3.500M608.100 569.700h-3.500v3.700h3.500" fill="none" stroke="#fff" stroke-width="1.600"/>
  <!-- emoji -->
  <circle cx="648.500" cy="571.500" r="7.600" fill="none" stroke="#fff" stroke-width="1.800"/><circle cx="645.700" cy="569.300" r="1.200" fill="#fff"/><circle cx="651.300" cy="569.300" r="1.200" fill="#fff"/><path d="M644 572.800h9a4.500 4.500 0 01-9 0z" fill="#fff"/>
  <!-- present -->
  <rect x="684.800" y="565.600" width="17.600" height="12.600" rx="1.300" fill="none" stroke="#fff" stroke-width="2.100"/><path d="M693.600 568.300l-3.500 3.600h2.300v3.200h2.400v-3.200h2.300z" fill="#fff"/>
  <!-- hand -->
  <g transform="translate(739 571.500) scale(1.120) translate(-737.400 -571.500)"><path d="M733.800 572.500v-5.700a1.100 1.100 0 012.200 0v4.500-6.300a1.100 1.100 0 012.200 0v6-6.800a1.100 1.100 0 012.200 0v7-5.500a1.100 1.100 0 012.200 0v9c0 3.200-2 5.800-5.400 5.800-2.700 0-4-1.400-5.200-3.500l-2.300-4.200c-.5-1 1-1.800 1.800-1z" fill="none" stroke="#fff" stroke-width="1.450" stroke-linejoin="round"/></g>
  <!-- more -->
  <circle cx="784" cy="566.400" r="1.900" fill="#fff"/><circle cx="784" cy="571.700" r="1.900" fill="#fff"/><circle cx="784" cy="577" r="1.900" fill="#fff"/>
  <!-- end call -->
  <g transform="translate(835.700 572) scale(1.250) translate(-835.500 -572)"><path d="M827 573.500c0-1 .3-1.800 1.200-2.400 2-1.300 4.500-1.900 7.300-1.900s5.300.6 7.300 1.900c.9.600 1.200 1.400 1.200 2.400v.9c0 .6-.5 1-1.100.9l-2.900-.6c-.5-.1-.8-.5-.8-1v-1.600c-1.100-.5-2.400-.7-3.700-.7s-2.600.2-3.700.7v1.600c0 .5-.3.900-.8 1l-2.900.6c-.6.100-1.100-.3-1.100-.9z" fill="#fff"/></g>
 </svg>
 <!-- status bar icons -->
 <svg style="left:0;top:521px" width="900" height="16" viewBox="0 521 900 16">
  <g fill="none" stroke="#6a6a6a" stroke-width=".8"><path d="M62.500 526v7.500l2-1h2.500v-7.500h-2.500zM67 525h2.500v4"/><path d="M69.500 530.500c1.500 0 1.500-2 0-2" /><circle cx="69.500" cy="532.600" r=".3"/></g>
  <g stroke="#555" stroke-width=".9"><path d="M554.500 529.500h6M554.500 531.500h6M554.500 533.500h6"/><path d="M556 527.500h3l-1.500-2z" fill="#555"/></g>
  <path d="M606.500 524.500h9v6h-5l-2 2.200v-2.200h-2z" fill="#4a4a4a"/>
  <rect x="664" y="522" width="25" height="14" fill="#c8c6c6"/>
  <g fill="none" stroke="#5a5a5a" stroke-width=".8"><rect x="671.500" y="525" width="10" height="8.500"/><path d="M674.500 525v8.500M674.500 528h7"/><rect x="675.800" y="529.500" width="4.300" height="2.500"/></g>
  <g fill="none" stroke="#6a6a6a" stroke-width=".8"><rect x="697.500" y="525" width="3.600" height="3.400"/><rect x="703" y="525" width="3.600" height="3.400"/><rect x="697.500" y="530.300" width="3.600" height="3.400"/><rect x="703" y="530.300" width="3.600" height="3.400"/></g>
  <g fill="#9a9a9a" stroke="#6a6a6a" stroke-width=".7"><path d="M723.500 525.500l4 1v7.500l-4-1z"/><path d="M732.500 525.500l-4 1v7.500l4-1z" fill="#c5c5c5"/></g>
  <g fill="none" stroke="#5a5a5a" stroke-width=".9"><path d="M749.500 525.500h11"/><rect x="751" y="525.500" width="8" height="4.500" fill="#e8e8e8"/><path d="M755 530v3.500M752.800 533.700h4.400"/></g>
  <path d="M772.500 530h5" stroke="#555" stroke-width="1"/><path d="M781 530h64" stroke="#a9a9a9" stroke-width=".8"/><path d="M813.500 528.500v3" stroke="#a9a9a9" stroke-width=".8"/><rect x="800.700" y="525.500" width="2.600" height="9" fill="#4d4d4d"/>
  <path d="M849.500 530h5M852 527.500v5" stroke="#555" stroke-width="1"/>
  <g fill="none" stroke="#7a7a7a" stroke-width=".8"><rect x="886.300" y="525.800" width="7" height="7"/><path d="M887.600 527.100l1.500 1.500M892 527.100l-1.500 1.500M887.600 531.500l1.500-1.500M892 531.500l-1.500-1.500"/></g><g fill="#f4f4f4"><rect x="888.800" y="525" width="2" height="1.600"/><rect x="888.800" y="532" width="2" height="1.600"/><rect x="885.500" y="528.300" width="1.600" height="2"/><rect x="892.500" y="528.300" width="1.600" height="2"/></g>
 </svg>
 <!-- doc tab icons -->
 <svg style="left:0;top:168px" width="440" height="18" viewBox="0 168 440 18">
  
  <g transform="translate(7.300 171)"><rect x="2.600" y=".5" width="7" height="11" fill="#fff" stroke="#c9805f" stroke-width=".6"/><rect x="0" y="2.500" width="6.500" height="7" fill="#d04a22"/><path d="M2 8.300V4h1.700c1.800 0 1.800 2.500 0 2.500H2.300" fill="none" stroke="#fff" stroke-width=".9"/><path d="M7.500 3.500h1.500M7.500 5.500h1.500M7.500 7.500h1.500" stroke="#d88a6a" stroke-width=".6"/></g><g transform="translate(101.500 171)"><rect x="2.600" y=".5" width="7" height="11" fill="#fff" stroke="#c9805f" stroke-width=".6"/><rect x="0" y="2.500" width="6.500" height="7" fill="#d04a22"/><path d="M2 8.300V4h1.700c1.800 0 1.800 2.500 0 2.500H2.300" fill="none" stroke="#fff" stroke-width=".9"/><path d="M7.500 3.500h1.500M7.500 5.500h1.500M7.500 7.500h1.500" stroke="#d88a6a" stroke-width=".6"/></g><g transform="translate(203.500 171)"><rect x="2.600" y=".5" width="7" height="11" fill="#fff" stroke="#c9805f" stroke-width=".6"/><rect x="0" y="2.500" width="6.500" height="7" fill="#d04a22"/><path d="M2 8.300V4h1.700c1.800 0 1.800 2.500 0 2.500H2.300" fill="none" stroke="#fff" stroke-width=".9"/><path d="M7.500 3.500h1.500M7.500 5.500h1.500M7.500 7.500h1.500" stroke="#d88a6a" stroke-width=".6"/></g>
  <path d="M83.800 174l6.400 6.400m0-6.400l-6.400 6.400" stroke="#9d9b9a" stroke-width=".9"/>
 </svg>
 <!-- tabbar right controls + work scrollbar -->
 <div style="left:872px;top:171.300px;width:10.700px;height:11.500px;background:#efeeee"></div><div style="left:886px;top:171.300px;width:10.500px;height:11.500px;background:#f8f8f8"></div><svg style="left:870px;top:168px" width="30" height="20" viewBox="870 168 30 20"><path d="M874.300 175.200h6l-3 3.400z" fill="#3a3a3a"/><path d="M888.200 173.800l5.600 5.800m0-5.800l-5.600 5.800" stroke="#2c2c2c" stroke-width="1.400"/></svg><div style="left:4px;top:184px;width:893px;height:1px;background:#cfcdcd"></div><div style="left:4px;top:185px;width:893px;height:2.500px;background:#efeeee"></div>
 <div style="left:888px;top:187px;width:8.500px;height:334px;background:#dddbdb"></div>
 <div style="left:888px;top:187px;width:8.500px;height:9px;background:#fdfdfd;border:1px solid #cfcdcd"></div>
 <div style="left:888px;top:196px;width:8.500px;height:13.300px;background:#fff;border:1px solid #cfcdcd"></div>
 <div style="left:888px;top:474px;width:8.500px;height:9.300px;background:#fdfdfd;border:1px solid #cfcdcd"></div>
 <div style="left:888px;top:483.300px;width:8.500px;height:38px;background:#eeeded"></div>
 <svg style="left:888px;top:187px" width="9" height="334" viewBox="888 187 9 334"><path d="M889.800 193.300l2.500-3 2.500 3z" fill="#555"/><path d="M889.800 477.200h5l-2.500 3z" fill="#555"/>
  <g fill="#666"><path d="M890 489.700l2.300-2.600 2.300 2.600zM890 492.700l2.300-2.600 2.300 2.600z"/><path d="M890 498.500h4.600l-2.300 2.600zM890 501.500h4.600l-2.300 2.600z"/></g></svg>
</div>

<!-- text labels -->
<span class="t" style="left:52.5px;top:22.4px;font-size:13px;color:#f3f3f3;font-weight:bold;transform:scaleX(0.9319);">Ольга Лаврик (Презентація)</span>
<span class="t" style="left:397.0px;top:71.0px;font-size:8.7px;color:#fdeee6;transform:scaleX(0.8983);-webkit-text-stroke:.2px #fdeee6;">ЛНУ Шевченка  -  PowerPoint</span>
<span class="t" style="left:706.0px;top:71.0px;font-size:8.7px;color:#fdeee6;transform:scaleX(0.8844);-webkit-text-stroke:.2px #fdeee6;">Olha Lavryk</span>
<span class="t" style="left:13.0px;top:92.7px;font-size:8.7px;color:#fdeee6;transform:scaleX(0.8895);-webkit-text-stroke:.2px #fdeee6;">Файл</span>
<span class="t" style="left:51.0px;top:92.7px;font-size:8.7px;color:#fdeee6;transform:scaleX(0.8861);-webkit-text-stroke:.2px #fdeee6;">Основне</span>
<span class="t" style="left:100.0px;top:92.7px;font-size:8.7px;color:#fdeee6;transform:scaleX(0.8848);-webkit-text-stroke:.2px #fdeee6;">Вставлення</span>
<span class="t" style="left:159.0px;top:92.7px;font-size:8.7px;color:#fdeee6;transform:scaleX(0.9082);-webkit-text-stroke:.2px #fdeee6;">Конструктор</span>
<span class="t" style="left:222.0px;top:92.7px;font-size:8.7px;color:#fdeee6;transform:scaleX(0.9146);-webkit-text-stroke:.2px #fdeee6;">Переходи</span>
<span class="t" style="left:275.0px;top:92.7px;font-size:8.7px;color:#fdeee6;transform:scaleX(0.9445);-webkit-text-stroke:.2px #fdeee6;">Анімація</span>
<span class="t" style="left:394.0px;top:92.7px;font-size:8.7px;color:#fdeee6;transform:scaleX(0.8651);-webkit-text-stroke:.2px #fdeee6;">Рецензування</span>
<span class="t" style="left:461.0px;top:92.7px;font-size:8.7px;color:#fdeee6;transform:scaleX(0.8833);-webkit-text-stroke:.2px #fdeee6;">Подання</span>
<span class="t" style="left:510.0px;top:92.7px;font-size:8.7px;color:#fdeee6;transform:scaleX(0.9021);-webkit-text-stroke:.2px #fdeee6;">Office Tab</span>
<span class="t" style="left:562.0px;top:92.7px;font-size:8.7px;color:#fdeee6;transform:scaleX(0.8956);-webkit-text-stroke:.2px #fdeee6;">Довідка</span>
<span class="t" style="left:626.0px;top:92.7px;font-size:8.7px;color:#fdeee6;transform:scaleX(0.9258);-webkit-text-stroke:.2px #fdeee6;">Скажіть, що потрібно зробити</span>
<span class="t" style="left:823.0px;top:92.7px;font-size:8.7px;color:#fdeee6;transform:scaleX(0.8982);-webkit-text-stroke:.2px #fdeee6;">Спільний доступ</span>
<span class="t" style="left:325.8px;top:92.7px;font-size:8.7px;color:#bd4a22;transform:scaleX(0.8731);-webkit-text-stroke:.2px #c4481c;">Показ слайдів</span>
<span class="t" style="left:22.0px;top:135.6px;font-size:8.5px;color:#444;transform:scaleX(0.7781);-webkit-text-stroke:.2px #444;">З</span>
<span class="t" style="left:9.0px;top:145.0px;font-size:8.5px;color:#444;transform:scaleX(0.9309);-webkit-text-stroke:.2px #444;">початку</span>
<span class="t" style="left:41.0px;top:135.6px;font-size:8.5px;color:#444;transform:scaleX(0.9684);-webkit-text-stroke:.2px #444;">З поточного</span>
<span class="t" style="left:52.0px;top:145.0px;font-size:8.5px;color:#444;transform:scaleX(0.8458);-webkit-text-stroke:.2px #444;">слайда</span>
<span class="t" style="left:105.0px;top:135.6px;font-size:8.5px;color:#444;transform:scaleX(0.9027);-webkit-text-stroke:.2px #444;">Онлайнове</span>
<span class="t" style="left:96.0px;top:145.0px;font-size:8.5px;color:#444;transform:scaleX(0.9062);-webkit-text-stroke:.2px #444;">презентування</span>
<span class="t" style="left:157.0px;top:135.6px;font-size:8.5px;color:#444;transform:scaleX(0.9161);-webkit-text-stroke:.2px #444;">Користувацький</span>
<span class="t" style="left:160.0px;top:145.0px;font-size:8.5px;color:#444;transform:scaleX(0.8858);-webkit-text-stroke:.2px #444;">показ слайдів</span>
<span class="t" style="left:71.0px;top:157.6px;font-size:8.5px;color:#444;transform:scaleX(0.8967);-webkit-text-stroke:.2px #444;">Початок показу слайдів</span>
<span class="t" style="left:234.0px;top:135.6px;font-size:8.5px;color:#444;transform:scaleX(0.9113);-webkit-text-stroke:.2px #444;">Налаштувати</span>
<span class="t" style="left:230.0px;top:145.0px;font-size:8.5px;color:#444;transform:scaleX(0.9059);-webkit-text-stroke:.2px #444;">показ слайдів...</span>
<span class="t" style="left:289.0px;top:135.6px;font-size:8.5px;color:#444;transform:scaleX(0.9268);-webkit-text-stroke:.2px #444;">Приховати</span>
<span class="t" style="left:298.0px;top:145.0px;font-size:8.5px;color:#444;transform:scaleX(0.8877);-webkit-text-stroke:.2px #444;">слайд</span>
<span class="t" style="left:337.0px;top:135.6px;font-size:8.5px;color:#444;transform:scaleX(0.9084);-webkit-text-stroke:.2px #444;">Репетиція</span>
<span class="t" style="left:347.5px;top:145.0px;font-size:8.5px;color:#444;transform:scaleX(0.9345);-webkit-text-stroke:.2px #444;">часу</span>
<span class="t" style="left:376.0px;top:135.6px;font-size:8.5px;color:#444;transform:scaleX(0.9049);-webkit-text-stroke:.2px #444;">Записати показ</span>
<span class="t" style="left:387.5px;top:145.0px;font-size:8.5px;color:#444;transform:scaleX(0.9148);-webkit-text-stroke:.2px #444;">слайдів</span>
<span class="t" style="left:448.0px;top:137.6px;font-size:8.5px;color:#444;transform:scaleX(0.8975);-webkit-text-stroke:.2px #444;">Відтворювати дикторський текст</span>
<span class="t" style="left:583.0px;top:117.6px;font-size:8.5px;color:#444;transform:scaleX(0.9329);-webkit-text-stroke:.2px #444;">Використовувати хронометраж</span>
<span class="t" style="left:583.0px;top:137.6px;font-size:8.5px;color:#444;transform:scaleX(0.9038);-webkit-text-stroke:.2px #444;">Елементи керування мультимедіа</span>
<span class="t" style="left:443.0px;top:157.6px;font-size:8.5px;color:#444;transform:scaleX(0.8511);-webkit-text-stroke:.2px #444;">Налаштування</span>
<span class="t" style="left:734.0px;top:117.6px;font-size:8.5px;color:#444;transform:scaleX(0.9382);-webkit-text-stroke:.2px #444;">Монітор:</span>
<span class="t" style="left:773.0px;top:117.6px;font-size:8.5px;color:#444;transform:scaleX(0.9143);-webkit-text-stroke:.2px #444;">Автоматично</span>
<span class="t" style="left:734.0px;top:138.6px;font-size:8.5px;color:#444;transform:scaleX(0.9084);-webkit-text-stroke:.2px #444;">Режим доповідача</span>
<span class="t" style="left:776.0px;top:157.6px;font-size:8.5px;color:#444;transform:scaleX(0.9315);-webkit-text-stroke:.2px #444;">Монітори</span>
<span class="t" style="left:448.0px;top:117.6px;font-size:8.5px;color:#b3b1b0;transform:scaleX(0.9173);">Постійно оновлювати слайди</span>
<span class="t" style="left:21.0px;top:174.3px;font-size:8.7px;color:#333;font-weight:bold;transform:scaleX(0.9039);">ЛНУ Шевченка</span>
<span class="t" style="left:124.0px;top:174.3px;font-size:8.7px;color:#444;transform:scaleX(0.8879);-webkit-text-stroke:.15px #444;">Діяльність НППГ</span>
<span class="t" style="left:228.0px;top:174.3px;font-size:8.7px;color:#444;transform:scaleX(0.9076);-webkit-text-stroke:.15px #444;">НПП Голосіївський  (загальна)[Protected View]</span>
<span class="t" style="left:11.5px;top:195.3px;font-size:10.5px;color:#d5603a;transform:scaleX(0.5989);">1</span>
<span class="t" style="left:11.0px;top:258.8px;font-size:10.5px;color:#555;transform:scaleX(0.9412);">2</span>
<span class="t" style="left:11.0px;top:321.7px;font-size:10.5px;color:#555;transform:scaleX(0.9412);">3</span>
<span class="t" style="left:11.0px;top:384.7px;font-size:10.5px;color:#555;transform:scaleX(0.9412);">4</span>
<span class="t" style="left:11.0px;top:447.1px;font-size:10.5px;color:#555;transform:scaleX(0.9412);">5</span>
<span class="t" style="left:11.0px;top:510.0px;font-size:10.5px;color:#555;transform:scaleX(0.9412);">6</span>
<span class="t" style="left:8.0px;top:526.3px;font-size:8.3px;color:#444;transform:scaleX(0.8485);-webkit-text-stroke:.2px #444;">Слайд 1 з 21</span>
<span class="t" style="left:83.0px;top:526.3px;font-size:8.3px;color:#444;transform:scaleX(0.9069);-webkit-text-stroke:.2px #444;">українська</span>
<span class="t" style="left:565.0px;top:526.3px;font-size:8.3px;color:#444;transform:scaleX(0.9138);-webkit-text-stroke:.2px #444;">Нотатки</span>
<span class="t" style="left:617.0px;top:526.3px;font-size:8.3px;color:#444;transform:scaleX(0.9475);-webkit-text-stroke:.2px #444;">Примітки</span>
<span class="t" style="left:862.8px;top:526.3px;font-size:8.3px;color:#444;transform:scaleX(0.8549);-webkit-text-stroke:.2px #444;">68%</span>
<span class="t" style="left:319.0px;top:285.5px;font-size:21.5px;color:#3b5b22;transform:scaleX(1.0491);-webkit-text-stroke:.25px #3b5b22;">ПІДХОДИ</span>
<span class="t" style="left:425.6px;top:285.5px;font-size:21.5px;color:#3b5b22;transform:scaleX(1.0386);-webkit-text-stroke:.25px #3b5b22;">ТА</span>
<span class="t" style="left:460.0px;top:285.5px;font-size:21.5px;color:#3b5b22;transform:scaleX(1.0145);-webkit-text-stroke:.25px #3b5b22;">МЕТОДИ</span>
<span class="t" style="left:558.6px;top:285.5px;font-size:21.5px;color:#3b5b22;transform:scaleX(0.8631);-webkit-text-stroke:.25px #3b5b22;">У</span>
<span class="t" style="left:577.5px;top:285.5px;font-size:21.5px;color:#3b5b22;transform:scaleX(0.9197);-webkit-text-stroke:.25px #3b5b22;">ЗБЕРЕЖЕННІ</span>
<span class="t" style="left:316.2px;top:312.1px;font-size:21.5px;color:#3b5b22;transform:scaleX(0.9692);-webkit-text-stroke:.25px #3b5b22;">ДИКОЇ</span>
<span class="t" style="left:388.4px;top:312.1px;font-size:21.5px;color:#3b5b22;transform:scaleX(1.0153);-webkit-text-stroke:.25px #3b5b22;">ПРИРОДИ</span>
<span class="t" style="left:503.6px;top:312.1px;font-size:21.5px;color:#3b5b22;transform:scaleX(0.9890);-webkit-text-stroke:.25px #3b5b22;">УКРАЇНИ</span>
<span class="t" style="left:602.5px;top:312.1px;font-size:21.5px;color:#3b5b22;transform:scaleX(0.8366);-webkit-text-stroke:.25px #3b5b22;">В</span>
<span class="t" style="left:621.6px;top:312.1px;font-size:21.5px;color:#3b5b22;transform:scaleX(0.9977);-webkit-text-stroke:.25px #3b5b22;">УМОВАХ</span>
<span class="t" style="left:365.0px;top:340.1px;font-size:21.5px;color:#3b5b22;transform:scaleX(1.0028);-webkit-text-stroke:.25px #3b5b22;">ПОВНОМАСШТАБНОЇ</span>
<span class="t" style="left:598.5px;top:340.1px;font-size:21.5px;color:#3b5b22;transform:scaleX(0.9933);-webkit-text-stroke:.25px #3b5b22;">ВІЙНИ</span>
<span class="t" style="left:311.3px;top:453.4px;font-size:9px;color:#1c1c1c;transform:scaleX(0.9948);-webkit-text-stroke:.35px #1c1c1c;">Ольга Лаврик,</span>
<span class="t" style="left:311.3px;top:465.4px;font-size:9px;color:#1c1c1c;transform:scaleX(1.0799);-webkit-text-stroke:.35px #1c1c1c;">Провідний фахівець еколого-освітнього відділу НПП «Голосіївський»</span>
<span class="t" style="left:11.0px;top:564.1px;font-size:14px;color:#fff;font-weight:bold;transform:scaleX(0.8796);">12:32</span>
<span class="t" style="left:64.0px;top:564.1px;font-size:14px;color:#fff;font-weight:bold;transform:scaleX(1.0334);">pbr-drqq-dja</span>
</div>
</body>
</html>
